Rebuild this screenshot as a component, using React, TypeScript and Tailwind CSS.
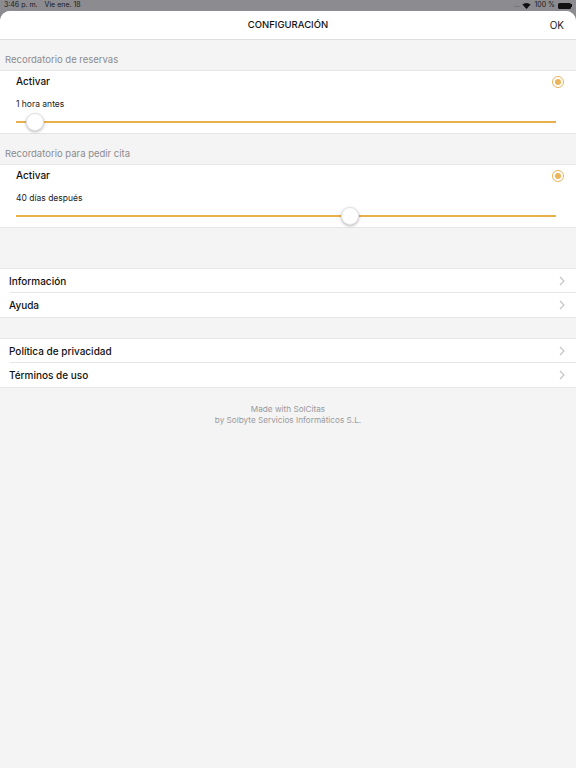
import React from "react";

const font = { fontFamily: 'Inter, "Liberation Sans", Arial, sans-serif' };

function Radio() {
  return (
    <div className="w-[12px] h-[12px] rounded-full border-[1.5px] border-[#e9b45c] flex items-center justify-center">
      <div className="w-[6px] h-[6px] rounded-full bg-[#e9b45c]" />
    </div>
  );
}

function Slider({ pos }: { pos: number }) {
  return (
    <div className="relative h-[18px] ml-[16px] mr-[20px]">
      <div className="absolute left-0 right-0 top-[8px] h-[1.5px] bg-[#e8b04a]" />
      <div
        className="absolute top-0 w-[18px] h-[18px] rounded-full bg-white shadow-[0_1px_3px_rgba(0,0,0,0.3)] border-[0.5px] border-[#e4e4e4]"
        style={{ left: pos - 9 }}
      />
    </div>
  );
}

function Reminder({ title, label, pos }: { title: string; label: string; pos: number }) {
  return (
    <>
      <div className="h-[30px] flex items-end pl-[5px] pb-[3px] text-[9.5px] text-[#8b8b8e]">{title}</div>
      <div className="bg-white border-y border-[#e6e6e6] h-[64px]">
        <div className="h-[21px] flex items-center justify-between pl-[16px] pr-[12px]">
          <span className="text-[10px] font-medium text-[#111]">Activar</span>
          <Radio />
        </div>
        <div className="h-[21px] flex items-center pt-[3px] pl-[16px] text-[8.5px] text-[#222]">{label}</div>
        <Slider pos={pos} />
      </div>
    </>
  );
}

function Chevron() {
  return (
    <svg width="6" height="10" viewBox="0 0 6 10">
      <path d="M1 1l4 4-4 4" fill="none" stroke="#c4c4c7" strokeWidth="1.2" />
    </svg>
  );
}

function Row({ label, sep }: { label: string; sep?: boolean }) {
  return (
    <div className="relative h-[24px] flex items-center justify-between pl-[9px] pr-[11px] bg-white">
      <span className="text-[10px] font-medium text-[#111]">{label}</span>
      <Chevron />
      {sep && <div className="absolute left-[10px] right-0 bottom-0 h-px bg-[#e6e6e6]" />}
    </div>
  );
}

export default function App() {
  return (
    <div className="w-[576px] h-[768px] bg-[#8c8c90] flex flex-col overflow-hidden" style={font}>
      <div className="h-[11px] flex items-center justify-between px-[4px] text-[7px] text-[#1a1a1a]">
        <div className="flex gap-[7px]">
          <span>3:46 p. m.</span>
          <span>Vie ene. 18</span>
        </div>
        <div className="flex items-center gap-[3px]">
          <span className="text-[#5a5a5e] tracking-[-0.5px]">....</span>
          <svg width="9" height="7" viewBox="0 0 12 9">
            <path d="M6 9 L0.5 3.2 A8 8 0 0 1 11.5 3.2 Z" fill="#111" />
          </svg>
          <span>100 %</span>
          <div className="flex items-center">
            <div className="w-[13px] h-[6px] rounded-[1.5px] bg-[#111]" />
            <div className="w-[1px] h-[3px] bg-[#111]" />
          </div>
        </div>
      </div>
      <div className="flex-1 bg-[#f4f4f4] rounded-t-[10px] overflow-hidden flex flex-col">
        <div className="h-[29px] bg-white border-b border-[#dedede] relative flex items-center justify-center">
          <span className="text-[9.5px] font-medium text-[#111]">CONFIGURACIÓN</span>
          <span className="absolute right-[12px] text-[10px] text-[#222]">OK</span>
        </div>
        <Reminder title="Recordatorio de reservas" label="1 hora antes" pos={19} />
        <Reminder title="Recordatorio para pedir cita" label="40 días después" pos={334} />
        <div className="h-[40px]" />
        <div className="border-y border-[#e6e6e6]">
          <Row label="Información" sep />
          <Row label="Ayuda" />
        </div>
        <div className="h-[20px]" />
        <div className="border-y border-[#e6e6e6]">
          <Row label="Política de privacidad" sep />
          <Row label="Términos de uso" />
        </div>
        <div className="pt-[16px] flex flex-col items-center text-[8.2px] leading-[11px] text-[#9a9a9d]">
          <span>Made with SolCitas</span>
          <span>by Solbyte Servicios Informáticos S.L.</span>
        </div>
      </div>
    </div>
  );
}
